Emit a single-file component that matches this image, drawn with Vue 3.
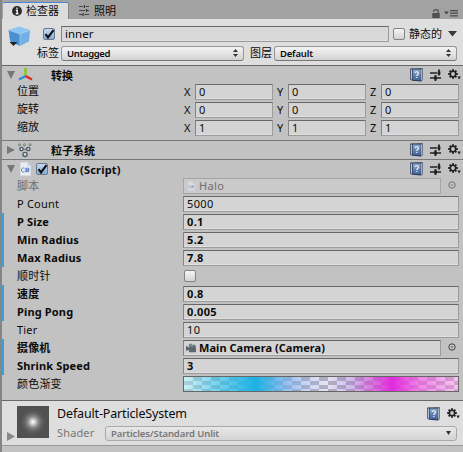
<script setup>
const axes = [
  { label: '位置', value: '0' },
  { label: '旋转', value: '0' },
  { label: '缩放', value: '1' },
]

const props = [
  { label: 'P Count', value: '5000' },
  { label: 'P Size', value: '0.1', changed: true },
  { label: 'Min Radius', value: '5.2', changed: true },
  { label: 'Max Radius', value: '7.8', changed: true },
  { label: '顺时针', type: 'toggle' },
  { label: '速度', value: '0.8', changed: true },
  { label: 'Ping Pong', value: '0.005', changed: true },
  { label: 'Tier', value: '10' },
  { label: '摄像机', value: 'Main Camera (Camera)', type: 'camera', changed: true },
  { label: 'Shrink Speed', value: '3', changed: true },
  { label: '颜色渐变', type: 'gradient' },
]
</script>

<template>
  <div class="inspector">
    <svg class="defs" width="0" height="0">
      <defs>
        <linearGradient id="bookFill" x1="0" y1="0" x2="0" y2="1">
          <stop offset="0" stop-color="#8fa9cc" /><stop offset="1" stop-color="#3f629b" />
        </linearGradient>
      </defs>
      <symbol id="book" viewBox="0 0 13 14">
        <path d="M.3 .6 12.7 .3V12L11 13.6 2.5 12.8.3 11.8Z" fill="#26334f" />
        <path d="M11.3 1.3h.9v10.4l-.9 1z" fill="#dfe6ee" />
        <path d="M1 1.4l1.1.2v10.2L1 11.2z" fill="#b5c5db" />
        <path d="M2.8 1.4H10.7V12.5L2.8 11.9Z" fill="url(#bookFill)" />
        <path d="M5 5.1C5 3.3 8.4 3.3 8.4 5.2 8.4 6.5 6.8 6.5 6.8 7.9M6.8 8.9V10" fill="none" stroke="#fff" stroke-width="1.1" />
      </symbol>
      <symbol id="sliders" viewBox="0 0 11 12">
        <path d="M0 4H7M0 9H11" stroke="#222" stroke-width="1.5" />
        <path d="M9 .5V6.5M5.5 6V12" stroke="#222" stroke-width="1.8" />
        <path d="M7.6 4h2.8M4 9h3" stroke="#222" stroke-width="2.8" />
      </symbol>
      <symbol id="gear" viewBox="0 0 13 12">
        <path d="M5 .2V9.8M.2 5H9.8M1.6 1.6 8.4 8.4M8.4 1.6 1.6 8.4" stroke="#222" stroke-width="1.9" />
        <circle cx="5" cy="5" r="3.4" fill="#222" /><circle cx="5" cy="5" r="1.9" fill="#c8c8c8" />
        <path d="M9.4 7.6H12.8L11.1 10.6Z" fill="#222" />
      </symbol>
      <symbol id="script" viewBox="0 0 11 14">
        <path d="M.3.3H7.6L10.7 3.4V13.7H.3Z" fill="#e9edf2" stroke="#d2d6dc" stroke-width=".6" />
        <path d="M7.6.3V3.4H10.7Z" fill="#bcc5d1" />
        <path d="M4.5 6.4C3.5 5.6 1.4 6 1.4 8S3.5 10.4 4.5 9.6M6.4 5.6 5.9 10.4M8.4 5.6 7.9 10.4M5.2 7.1H9.5M5 9H9.3" fill="none" stroke="#4774c9" stroke-width=".9" />
      </symbol>
      <symbol id="picker" viewBox="0 0 8 8">
        <circle cx="4" cy="4" r="3.2" fill="none" stroke="#333" stroke-width=".9" /><rect x="3.4" y="3.4" width="1.2" height="1.2" fill="#222" />
      </symbol>
    </svg>

    <header class="tabs">
      <div class="tab active">
        <svg width="10" height="10" viewBox="0 0 10 10"><circle cx="5" cy="5" r="4.9" fill="#272727" /><path d="M5 1.6V3.2M3.8 4.5H5.2V7.6M3.7 7.7H6.5" fill="none" stroke="#eee" stroke-width="1.4" /></svg>
        <span>检查器</span>
      </div>
      <div class="tab">
        <svg width="11" height="11" viewBox="0 0 11 11"><path d="M0 1.5H4M7 1.5H10M0 5.5H6M8 5.5H10M0 9.5H3M5.5 9.5H10" stroke="#444" /><path d="M5.5 0V3M7.5 4V7M4 8V11" stroke="#333" stroke-width="1.2" /></svg>
        <span>照明</span>
      </div>
      <div class="window-tools">
        <svg width="8" height="9" viewBox="0 0 8 9"><path d="M1.8 3V2C1.8.2 6.2.2 6.2 2V4.5" fill="none" stroke="#505050" stroke-width="1.2" /><path d="M.3 4H7.7V9H.3Z" fill="#505050" /></svg>
        <svg width="14" height="7" viewBox="0 0 14 7"><path d="M0 1.5H5L2.5 4.5ZM6 0H14V1.2H6ZM6 2.6H14V3.8H6ZM6 5.2H14V6.4H6Z" fill="#484848" /></svg>
      </div>
    </header>

    <section class="object">
      <svg class="cube" width="23" height="22" viewBox="0 0 23 22">
        <path d="M11 .5 22 4 12 8 .5 4Z" fill="#8cc5f1" /><path d="M.5 4 12 8V20L2.2 15.5Z" fill="#4a91d2" /><path d="M12 8 22 4 21 15.5 12 20Z" fill="#72b0e5" />
        <path d="M.5 4 12 8 22 4M12 8V20" fill="none" stroke="#a8d6f7" stroke-width=".6" /><path d="M1.5 16H9.5L5.5 20Z" fill="#222" />
      </svg>
      <div class="object-form">
        <div class="name-row">
          <span class="check on"><svg width="11" height="11" viewBox="0 0 11 11"><path d="M1.5 5.2 4 8.5 9.5 1.2" /></svg></span>
          <div class="field name">inner</div>
          <span class="check"></span>
          <span class="static">静态的</span>
          <svg width="9" height="6" viewBox="0 0 9 6"><path d="M0 0H9L4.5 5.5Z" fill="#383838" /></svg>
        </div>
        <div class="tag-row">
          <span>标签</span>
          <div class="select tag">Untagged<svg width="5" height="8" viewBox="0 0 5 8"><path d="M0 3 2.5 0 5 3ZM0 5H5L2.5 8Z" /></svg></div>
          <span class="layer-label">图层</span>
          <div class="select layer">Default<svg width="5" height="8" viewBox="0 0 5 8"><path d="M0 3 2.5 0 5 3ZM0 5H5L2.5 8Z" /></svg></div>
        </div>
      </div>
    </section>

    <section class="transform">
      <div class="head">
        <i class="fold open"></i>
        <svg class="kind" width="16" height="14" viewBox="0 0 16 14"><path d="M7.5 8V0" stroke="#85c91c" stroke-width="2.5" /><path d="M7.5 8 1 11.5" stroke="#2e8fd0" stroke-width="2.5" /><path d="M7.5 8 14 11.5" stroke="#e02b1f" stroke-width="2.5" /></svg>
        <b class="title">转换</b>
        <span class="tools"><svg width="13" height="14"><use href="#book" /></svg><svg width="11" height="12"><use href="#sliders" /></svg><svg width="13" height="12"><use href="#gear" /></svg></span>
      </div>
      <div v-for="row in axes" :key="row.label" class="axis-row">
        <span class="label">{{ row.label }}</span>
        <span class="axis">X</span><div class="field">{{ row.value }}</div>
        <span class="axis">Y</span><div class="field">{{ row.value }}</div>
        <span class="axis">Z</span><div class="field">{{ row.value }}</div>
      </div>
    </section>

    <section class="particles">
      <div class="head">
        <i class="fold"></i>
        <svg class="kind" width="14" height="15" viewBox="0 0 14 15">
          <g fill="#d3dbe0" stroke="#4c5960" stroke-width="1.3"><circle cx="3.5" cy="6" r="1.7" /><circle cx="10.3" cy="6" r="1.7" /><circle cx="7" cy="11.4" r="2.1" /></g>
          <g fill="#ccd9c6" stroke="#66766a" stroke-width="1"><circle cx="1.5" cy="1.8" r="1" /><circle cx="6.5" cy="1.8" r="1" /><circle cx="12" cy="1.8" r="1" /><circle cx="7" cy="6.5" r=".6" /></g>
        </svg>
        <b class="title">粒子系统</b>
        <span class="tools"><svg width="13" height="14"><use href="#book" /></svg><svg width="11" height="12"><use href="#sliders" /></svg><svg width="13" height="12"><use href="#gear" /></svg></span>
      </div>
    </section>

    <section class="halo">
      <div class="head">
        <i class="fold open"></i>
        <svg class="kind sheet" width="11" height="14"><use href="#script" /></svg>
        <span class="check on"><svg width="11" height="11" viewBox="0 0 11 11"><path d="M1.5 5.2 4 8.5 9.5 1.2" /></svg></span>
        <b class="title latin">Halo (Script)</b>
        <span class="tools"><svg width="13" height="14"><use href="#book" /></svg><svg width="11" height="12"><use href="#sliders" /></svg><svg width="13" height="12"><use href="#gear" /></svg></span>
      </div>
      <div class="prop disabled">
        <span class="label">脚本</span>
        <div class="field"><svg class="mini" width="7" height="10"><use href="#script" /></svg>Halo</div>
        <svg class="pick" width="8" height="8"><use href="#picker" /></svg>
      </div>
      <div v-for="p in props" :key="p.label" class="prop" :class="{ changed: p.changed }">
        <span class="label">{{ p.label }}</span>
        <span v-if="p.type === 'toggle'" class="check"></span>
        <div v-else-if="p.type === 'gradient'" class="gradient"></div>
        <div v-else class="field" :class="p.type">
          <svg v-if="p.type === 'camera'" class="mini cam" width="11" height="10" viewBox="0 0 11 10"><path d="M3.2 4.7 0 2.8V8L3.2 6.6Z" fill="#59656a" /><circle cx="4.6" cy="2.4" r="2" fill="#76848b" /><circle cx="8" cy="3.2" r="1.7" fill="#68767c" /><rect x="2.8" y="4" width="7.2" height="5.2" rx="1" fill="#5a676e" /></svg>{{ p.value }}
        </div>
        <svg v-if="p.type === 'camera'" class="pick" width="8" height="8"><use href="#picker" /></svg>
      </div>
    </section>

    <section class="material">
      <i class="fold"></i>
      <div class="preview"></div>
      <div class="material-info">
        <div class="material-title"><span>Default-ParticleSystem</span><span class="tools"><svg width="13" height="14"><use href="#book" /></svg><svg width="13" height="12"><use href="#gear" /></svg></span></div>
        <div class="shader"><span>Shader</span><div class="select">Particles/Standard Unlit<svg width="5" height="4" viewBox="0 0 5 4"><path d="M0 0H5L2.5 4Z" /></svg></div></div>
      </div>
    </section>
  </div>
</template>

<style>
body { margin: 0; background: #c2c2c2; }
</style>

<style scoped>
* { box-sizing: border-box; }
svg { display: block; flex: none; }
.inspector { position: relative; width: 463px; height: 452px; overflow: hidden; background: #c2c2c2; color: #0b0b0b; font: 11px/16px "Noto Sans", "Noto Sans CJK SC", sans-serif; white-space: nowrap; border-left: 2px solid #858585; }
.defs { position: absolute; }
.tabs { display: flex; height: 19px; background: #a2a2a2; padding-top: 2px; margin-left: -2px; padding-left: 3px; }
.tab { display: flex; align-items: center; gap: 4px; height: 17px; padding-left: 10px; }
.tab span { font-size: 11px; line-height: 16px; }
.tab.active { width: 66px; padding-left: 9px; background: #dcdcdc; border-top: 1px solid #4b86d0; border-right: 1px solid #858585; border-radius: 2px 2px 0 0; }
.tab.active svg { margin-top: -1px; }
.window-tools { display: flex; gap: 4px; align-items: center; margin-left: auto; padding: 5px 5px 0 0; }
.object { display: flex; height: 47px; padding: 7px 0 0 6px; background: #dedede; border-bottom: 1px solid #676767; }
.object-form { flex: 1; padding-left: 4px; }
.name-row { display: flex; align-items: center; height: 16px; padding-left: 8px; }
.check { display: block; flex: none; width: 12px; height: 12px; border: 1px solid #838383; border-radius: 2px; background: linear-gradient(#f6f6f6, #d2d2d2); }
.check.on { border-color: #69788e; background: linear-gradient(#c5d8ee, #86add9); }
.check path { fill: none; stroke: #101010; stroke-width: 2.1; }
.name-row .check.on { margin-right: 6px; }
.field { display: flex; align-items: center; height: 16px; padding-left: 3px; background: #d4d4d4; border: 1px solid #9b9b9b; border-top-color: #686868; border-left-color: #858585; letter-spacing: .35px; box-shadow: inset 0 -1px #e0e0e0; }
.field.name { width: 328px; margin-right: 4px; background: #d8d8d8; font-size: 11.5px; letter-spacing: 0; }
.static { width: 33px; margin: 0 6px 0 4px; }
.tag-row { display: flex; align-items: center; height: 16px; margin-top: 3px; padding-left: 2px; }
.select { display: flex; align-items: center; justify-content: space-between; height: 15px; padding: 0 5px; border: 1px solid #969696; border-bottom-color: #777; border-radius: 3px; background: linear-gradient(#f4f4f4, #d2d2d2); font: 600 9.5px/13px "Noto Sans", sans-serif; letter-spacing: -.35px; }
.select path { fill: #333; }
.tag { width: 183px; margin-left: 2px; }
.layer-label { margin-left: 6px; }
.layer { width: 183px; margin-left: 2px; letter-spacing: -.2px; }
.transform { height: 75px; border-bottom: 1px solid #777; }
.head { display: flex; align-items: center; height: 17px; padding: 1px 2px 0 5px; }
.fold { display: block; flex: none; width: 8px; height: 8px; background: #777; clip-path: polygon(0 0, 100% 50%, 0 100%); }
.fold.open { clip-path: polygon(0 0, 100% 0, 50% 100%); }
.kind { margin-left: 3px; }
.title { margin-left: 17px; padding-top: 2px; }
.particles .title { margin-left: 19px; }
.tools { display: flex; align-items: center; gap: 7px; margin-left: auto; }
.axis-row { display: grid; grid-template-columns: 167px 11px 78px 15px 78px 15px 78px; padding: 1px 0 0 15px; height: 18px; align-items: start; }
.axis-row .axis:nth-of-type(n + 3) { padding-left: 4px; }
.axis-row .label { margin-top: -1px; }
.particles { height: 19px; border-bottom: 1px solid #777; }
.halo { height: 241px; border-bottom: 1px solid #686868; }
.sheet { margin-left: 5px; }
.halo .head .check { margin-left: 5px; }
.title.latin { margin-left: 3px; padding: 1px 0 0; letter-spacing: .2px; }
.prop { display: grid; grid-template-columns: 166px 258px 18px; align-items: start; height: 18px; padding: 1px 0 0 15px; }
.prop .label { letter-spacing: .2px; }
.prop .field, .gradient { grid-column: 2 / 4; }
.prop .field:has(+ .pick) { grid-column: 2; }
.prop .check { margin: 2px 0 0 1px; }
.pick { margin: 3px 0 0 7px; }
.changed { font-weight: 700; box-shadow: inset 2px 0 #35a0dc; }
.changed .label { letter-spacing: .15px; }
.field.camera { letter-spacing: .05px; }
.disabled { color: #6e6e6e; }
.disabled .field { background: #cacaca; border-color: #a5a5a5; box-shadow: none; }
.disabled svg { opacity: .6; }
.mini { margin: 0 4px 0 1px; }
.cam { margin: 0 2px 0 -1px; }
.gradient { height: 16px; border: 1px solid #666; background: linear-gradient(90deg, #b7ecf4a0 0, #55c9eeb8 11%, #1cb1e2 26%, #78b3ebcc 37%, #a6b9ed90 44%, #cfc7ec60 52%, #b58fdf90 61%, #d654dacc 69%, #e12bdc 76%, #ed61e2cc 85%, #f7a5ea90 100%), repeating-conic-gradient(#9ea3a7 0 25%, #f4f5f6 0 50%) 0 0 / 18px 8px; }
.material { display: flex; height: 45px; background: #dedede; border-bottom: 1px solid #999; padding: 5px 0 0 5px; }
.material > .fold { width: 8px; height: 9px; margin-top: 26px; background: #888; }
.preview { width: 32px; height: 32px; margin-left: 2px; background: radial-gradient(circle, #fff 0, #ddd 8%, #898989 24%, #616161 39%, #515151 55%); }
.material-info { flex: 1; padding-left: 8px; }
.material-title { display: flex; height: 16px; padding-right: 3px; font-size: 12.5px; letter-spacing: -.15px; }
.shader { display: flex; align-items: center; height: 16px; margin-top: 3px; color: #777; letter-spacing: .15px; }
.shader .select { width: 352px; margin-left: auto; margin-right: 6px; color: #777; border-color: #aaa; background: linear-gradient(#e7e7e7, #d5d5d5); letter-spacing: -.1px; }
</style>
